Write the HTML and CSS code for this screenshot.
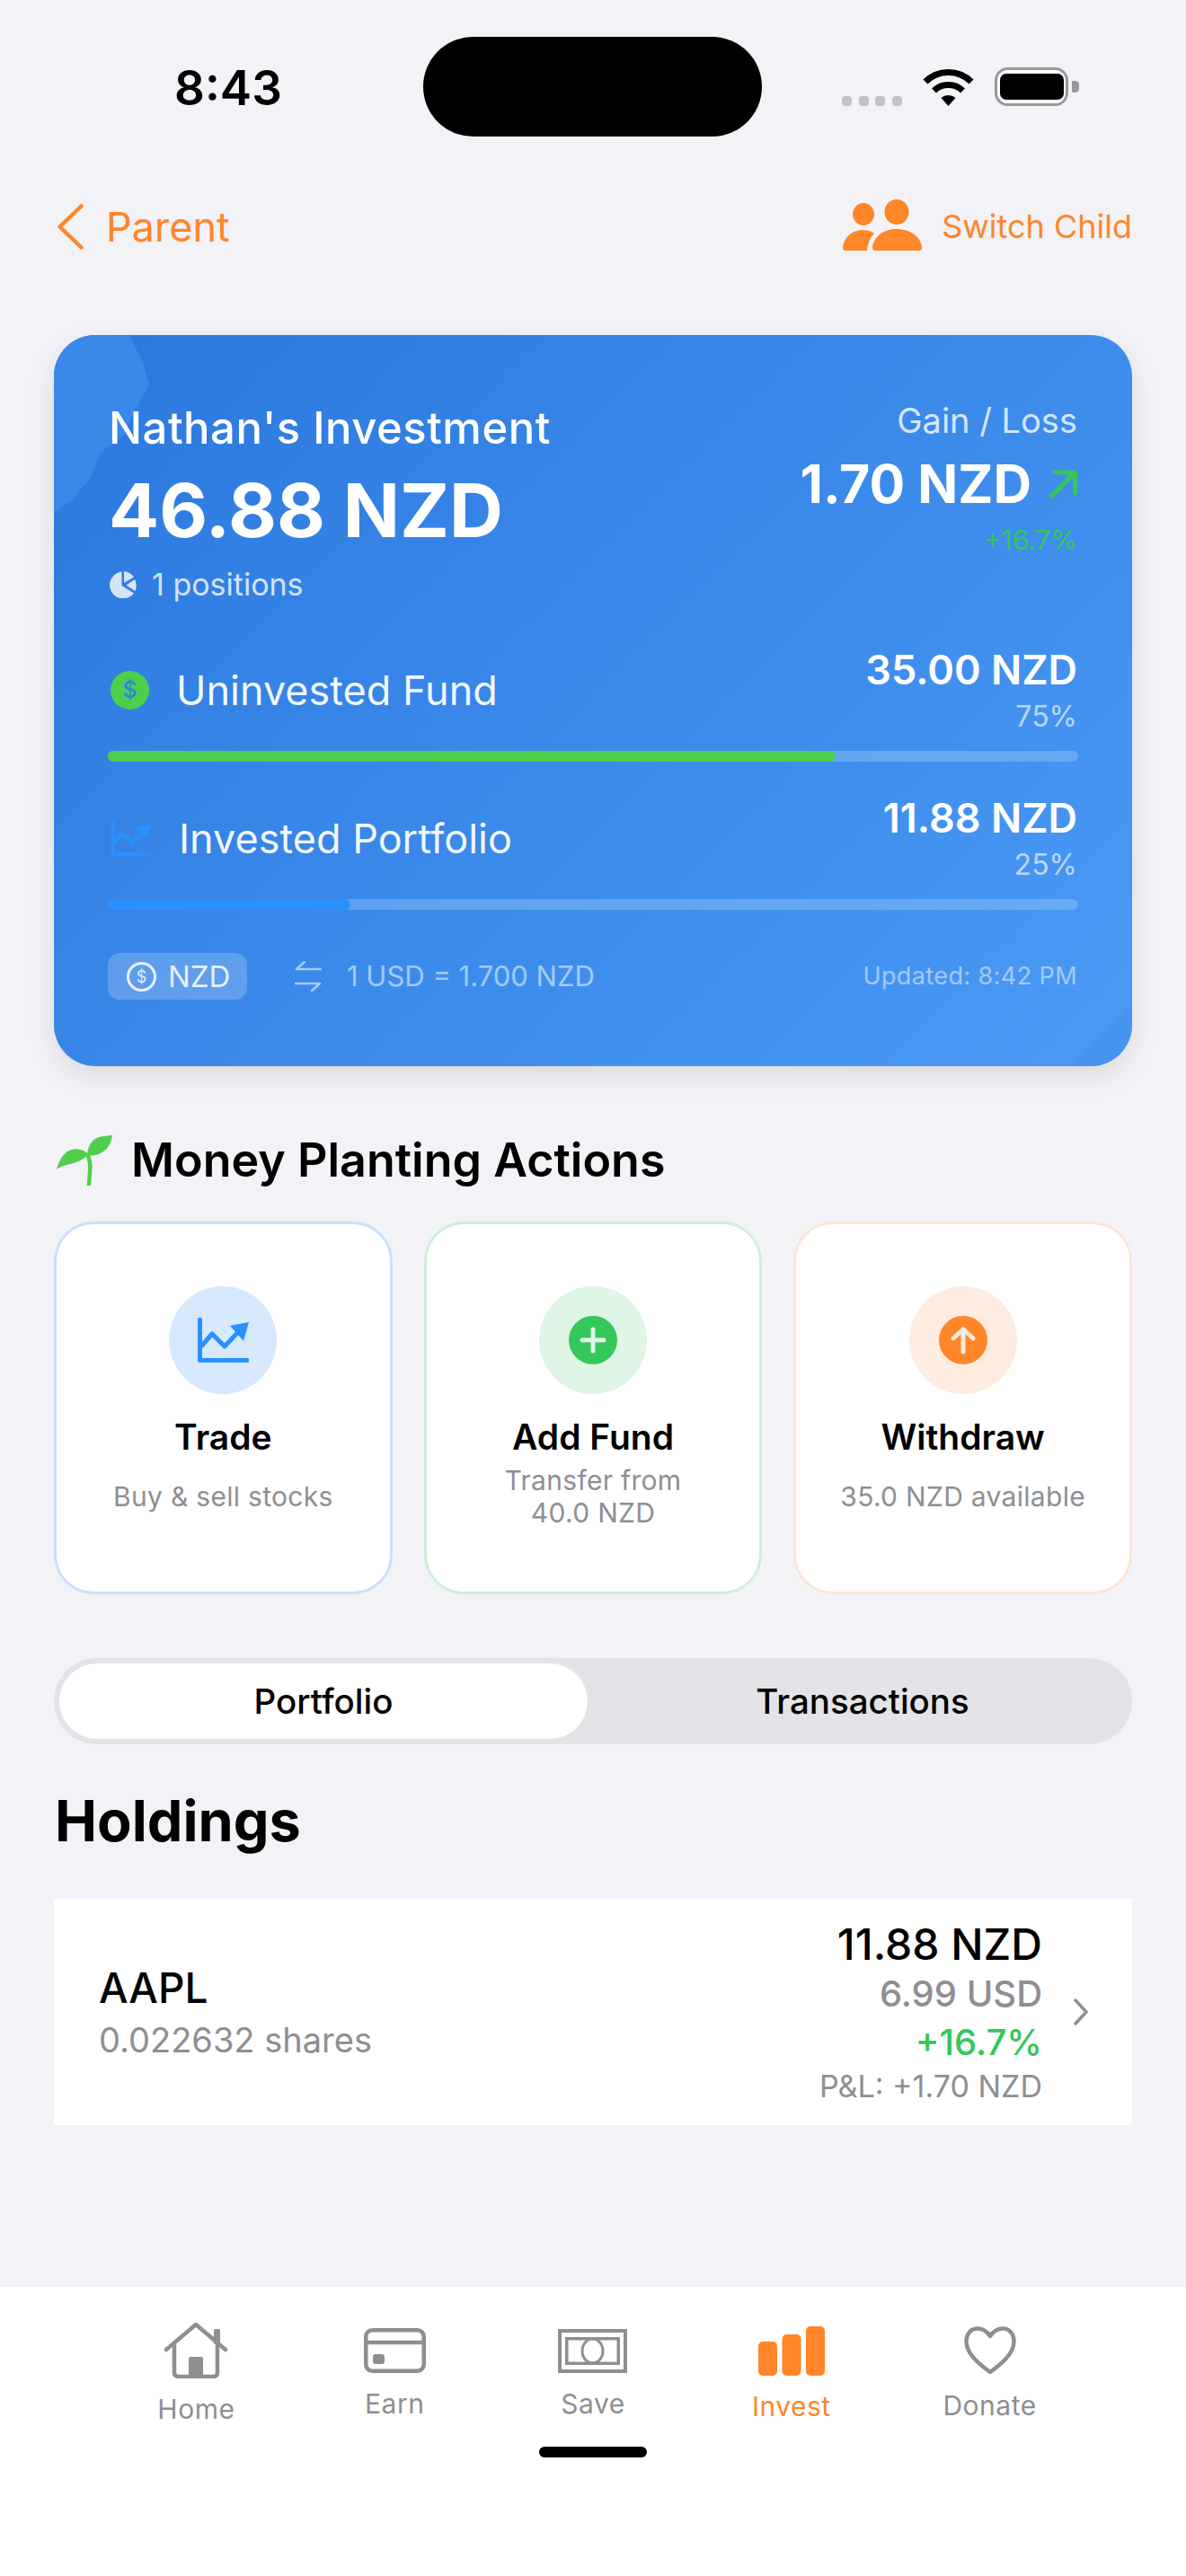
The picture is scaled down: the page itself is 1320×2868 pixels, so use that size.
FILE: index.html
```html
<!DOCTYPE html>
<html lang="en">
<head>
    <meta charset="UTF-8">
    <meta name="viewport" content="width=device-width, initial-scale=1.0">
    <title>Nathan's Investment</title>
    <link rel="stylesheet" href="styles.css">
</head>
<body>
    <svg class="defs" width="0" height="0">
        <symbol id="trend" viewBox="0 0 57 50">
            <path d="M2.5 2V47.5H55" fill="none" stroke="currentColor" stroke-width="5" stroke-linecap="round" stroke-linejoin="round"/>
            <path d="M4 32L16 18L30 32L46 15" fill="none" stroke="currentColor" stroke-width="5" stroke-linejoin="round"/>
            <path d="M36 9L57 5L51 26Z" fill="currentColor"/>
        </symbol>
    </svg>

    <!-- status bar -->
    <div class="status-bar">
        <div class="status-time">8:43</div>
        <div class="island"></div>
        <div class="status-icons">
            <div class="signal"><span></span><span></span><span></span><span></span></div>
            <svg class="wifi" width="57" height="42" viewBox="0 0 57 42">
                <path d="M3 15A36 36 0 0 1 54 15" fill="none" stroke="#000" stroke-width="7"/>
                <path d="M12.5 25A23 23 0 0 1 44.5 25" fill="none" stroke="#000" stroke-width="7"/>
                <path d="M28.5 42L20.5 33A12 12 0 0 1 36.5 33Z" fill="#000"/>
            </svg>
            <svg class="battery" width="94" height="43" viewBox="0 0 94 43">
                <rect x="1.5" y="1.5" width="79" height="40" rx="13" fill="#fff" stroke="#98989d" stroke-width="3"/>
                <rect x="6" y="7" width="71" height="29" rx="7" fill="#000"/>
                <path d="M86 15H89Q94 15 94 20V23Q94 28 89 28H86Z" fill="#98989d"/>
            </svg>
        </div>
    </div>

    <!-- top navigation -->
    <div class="top-nav">
        <div class="back-link">
            <svg width="29" height="51" viewBox="0 0 29 51">
                <path d="M26.5 2.5L2.5 25.5L26.5 48.5" fill="none" stroke="#ff8629" stroke-width="4.5" stroke-linecap="round" stroke-linejoin="round"/>
            </svg>
            <span>Parent</span>
        </div>
        <div class="switch-child">
            <svg width="88" height="57" viewBox="0 0 88 57">
                <ellipse cx="23" cy="16.5" rx="12" ry="12.5" fill="#ff8629"/>
                <ellipse cx="60" cy="14" rx="13.5" ry="14" fill="#ff8629"/>
                <path d="M33 54C34 41 46 33 60 33C74 33 87 41 88 54Q88 57 85 57H36Q33 57 33 54Z" fill="#ff8629"/>
                <path d="M0 54C1 43 10 34 22 34C27 34 31 35 35 38C31 42 28 48 27 57H3Q0 57 0 54Z" fill="#ff8629"/>
            </svg>
            <span>Switch Child</span>
        </div>
    </div>

    <!-- balance card -->
    <section class="balance-card">
        <div class="balance-top">
            <div class="balance-left">
                <div class="balance-title">Nathan's Investment</div>
                <div class="balance-amount">46.88 NZD</div>
                <div class="positions">
                    <svg width="30" height="30" viewBox="0 0 30 30">
                        <path d="M13.5 0.5A15 15 0 1 0 27 24.5L13.5 16Z" fill="currentColor"/>
                        <path d="M16 0A15 15 0 0 1 27 6.5L16 13Z" fill="currentColor"/>
                        <path d="M28 9A15 15 0 0 1 28.5 22L18.5 15.5Z" fill="currentColor"/>
                    </svg>
                    <span>1 positions</span>
                </div>
            </div>
            <div class="balance-right">
                <div class="gain-label">Gain / Loss</div>
                <div class="gain-amount">
                    <span>1.70 NZD</span>
                    <svg width="31" height="32" viewBox="0 0 31 32">
                        <path d="M2.5 29.5L28 3M6 3H28.5V26" fill="none" stroke="#34c759" stroke-width="5" stroke-linecap="round" stroke-linejoin="round"/>
                    </svg>
                </div>
                <div class="gain-percent">+16.7%</div>
            </div>
        </div>

        <div class="fund-row first">
            <div class="fund-name">
                <span class="dollar-dot">$</span>
                <span>Uninvested Fund</span>
            </div>
            <div class="fund-values">
                <div class="fund-amount">35.00 NZD</div>
                <div class="fund-percent">75%</div>
            </div>
        </div>
        <div class="bar"><div class="bar-fill green" style="width: 75%"></div></div>

        <div class="fund-row">
            <div class="fund-name">
                <svg class="trend-small" width="45" height="39"><use href="#trend"/></svg>
                <span>Invested Portfolio</span>
            </div>
            <div class="fund-values">
                <div class="fund-amount">11.88 NZD</div>
                <div class="fund-percent">25%</div>
            </div>
        </div>
        <div class="bar"><div class="bar-fill blue" style="width: 25%"></div></div>

        <div class="card-footer">
            <div class="currency-chip">
                <span class="chip-dollar">$</span>
                <span>NZD</span>
            </div>
            <svg class="swap" width="30" height="34" viewBox="0 0 30 34">
                <path d="M29 9H2L11 1M1 25H28L19 33" fill="none" stroke="currentColor" stroke-width="2.5" stroke-linecap="round" stroke-linejoin="round"/>
            </svg>
            <span class="rate">1 USD = 1.700 NZD</span>
            <span class="updated">Updated: 8:42 PM</span>
        </div>
    </section>

    <!-- actions -->
    <div class="section-title">
        <svg width="64" height="56" viewBox="0 0 64 56">
            <path d="M1 38C4 26 10 18 18 16C25 14 32 16 36 21C32 27 24 30 16 32C10 33 5 35 1 38Z" fill="#4fcf4b"/>
            <path d="M63 0C62 9 57 18 47 21C42 23 38 23 35 21C36 11 41 4 48 2C53 1 58 0 63 0Z" fill="#4fcf4b"/>
            <path d="M35 20C38 27 39 33 38 40C38 46 37 50 37 56" fill="none" stroke="#4fcf4b" stroke-width="4.5"/>
        </svg>
        <h2>Money Planting Actions</h2>
    </div>

    <div class="actions">
        <div class="action-card trade">
            <div class="action-icon">
                <svg width="57" height="50"><use href="#trend"/></svg>
            </div>
            <div class="action-title">Trade</div>
            <div class="action-sub">Buy &amp; sell stocks</div>
        </div>
        <div class="action-card fund">
            <div class="action-icon">
                <svg width="54" height="54" viewBox="0 0 54 54">
                    <circle cx="27" cy="27" r="27" fill="#34c759"/>
                    <path d="M27 15V39M15 27H39" fill="none" stroke="#dff5e6" stroke-width="5" stroke-linecap="round"/>
                </svg>
            </div>
            <div class="action-title">Add Fund</div>
            <div class="action-sub">Transfer from<br>40.0 NZD</div>
        </div>
        <div class="action-card withdraw">
            <div class="action-icon">
                <svg width="54" height="54" viewBox="0 0 54 54">
                    <circle cx="27" cy="27" r="27" fill="#ff8629"/>
                    <path d="M27 40V15M16 25L27 15L38 25" fill="none" stroke="#feece0" stroke-width="5" stroke-linecap="round" stroke-linejoin="round"/>
                </svg>
            </div>
            <div class="action-title">Withdraw</div>
            <div class="action-sub">35.0 NZD available</div>
        </div>
    </div>

    <!-- tabs -->
    <div class="segment">
        <div class="segment-item active">Portfolio</div>
        <div class="segment-item">Transactions</div>
    </div>

    <h1 class="holdings-title">Holdings</h1>

    <div class="holding">
        <div class="holding-left">
            <div class="holding-symbol">AAPL</div>
            <div class="holding-shares">0.022632 shares</div>
        </div>
        <div class="holding-right">
            <div class="holding-value">11.88 NZD</div>
            <div class="holding-usd">6.99 USD</div>
            <div class="holding-change">+16.7%</div>
            <div class="holding-pl">P&amp;L: +1.70 NZD</div>
        </div>
        <svg class="holding-arrow" width="18" height="30" viewBox="0 0 18 30">
            <path d="M3 2L15 15L3 28" fill="none" stroke="#8e8e93" stroke-width="3.5" stroke-linecap="round" stroke-linejoin="round"/>
        </svg>
    </div>

    <!-- bottom tabs -->
    <nav class="tab-bar">
        <div class="tabs">
            <div class="tab">
                <svg width="70" height="62" viewBox="0 0 70 62">
                    <path d="M2 30L35 2L68 30" fill="none" stroke="currentColor" stroke-width="4.5" stroke-linecap="round" stroke-linejoin="round"/>
                    <path d="M11 24V55Q11 60 16 60H54Q59 60 59 55V24" fill="none" stroke="currentColor" stroke-width="4.5"/>
                    <rect x="55" y="7" width="7" height="17" rx="1.5" fill="currentColor"/>
                    <rect x="27" y="38" width="16" height="24" rx="2" fill="currentColor"/>
                </svg>
                <span>Home</span>
            </div>
            <div class="tab">
                <svg width="69" height="50" viewBox="0 0 69 50">
                    <rect x="2.25" y="2.25" width="64.5" height="45.5" rx="7" fill="none" stroke="currentColor" stroke-width="4.5"/>
                    <path d="M2 16H67" stroke="currentColor" stroke-width="4.5"/>
                    <rect x="10" y="29" width="13" height="11" rx="3" fill="currentColor"/>
                </svg>
                <span>Earn</span>
            </div>
            <div class="tab">
                <svg width="77" height="49" viewBox="0 0 77 49">
                    <rect x="2" y="2" width="73" height="45" fill="none" stroke="currentColor" stroke-width="4"/>
                    <rect x="9.75" y="10.75" width="57.5" height="27.5" fill="none" stroke="currentColor" stroke-width="3.5"/>
                    <ellipse cx="38.5" cy="24.5" rx="11.5" ry="13.5" fill="none" stroke="currentColor" stroke-width="3"/>
                </svg>
                <span>Save</span>
            </div>
            <div class="tab active">
                <svg width="74" height="55" viewBox="0 0 74 55">
                    <rect x="0" y="17" width="21" height="38" rx="5" fill="currentColor"/>
                    <rect x="26.5" y="9" width="21" height="46" rx="5" fill="currentColor"/>
                    <rect x="53" y="0" width="21" height="55" rx="5" fill="currentColor"/>
                </svg>
                <span>Invest</span>
            </div>
            <div class="tab">
                <svg width="58" height="54" viewBox="0 0 58 54">
                    <path d="M29 11C25 5 20 2.5 15 2.5C7 2.5 2.5 9 2.5 17C2.5 31 18 43 29 51C40 43 55.5 31 55.5 17C55.5 9 51 2.5 43 2.5C38 2.5 33 5 29 11Z" fill="none" stroke="currentColor" stroke-width="4.5" stroke-linejoin="round"/>
                </svg>
                <span>Donate</span>
            </div>
        </div>
        <div class="home-indicator"></div>
    </nav>
</body>
</html>
```

FILE: styles.css
```css
* {
    box-sizing: border-box;
}

body {
    font-family: Inter, "Liberation Sans", sans-serif;
    margin: 0;
    padding: 0;
    width: 1320px;
    height: 2868px;
    display: flex;
    flex-direction: column;
    background-color: #f2f2f7;
    color: #000;
}

.defs {
    position: absolute;
}

/* status bar */
.status-bar {
    display: flex;
    align-items: center;
    margin-top: 41px;
    height: 111px;
}

.status-time {
    width: 471px;
    padding: 2px 0 0 194px;
    font-size: 53px;
    font-weight: 600;
    line-height: 64px;
}

.island {
    width: 377px;
    height: 111px;
    border-radius: 56px;
    background-color: #000;
}

.status-icons {
    display: flex;
    align-items: flex-end;
    margin-left: 89px;
}

.signal {
    display: flex;
    gap: 7.5px;
    margin-right: 23px;
}

.signal span {
    width: 11px;
    height: 11px;
    border-radius: 4px;
    background-color: #c2c2c4;
}

.wifi {
    margin-right: 23px;
}

/* top navigation */
.top-nav {
    display: flex;
    justify-content: space-between;
    align-items: center;
    height: 57px;
    margin-top: 70px;
    padding: 0 60px 0 64px;
    color: #ff8629;
}

.back-link {
    display: flex;
    align-items: center;
    gap: 25px;
    padding-top: 4px;
    font-size: 45px;
    line-height: 52px;
}

.switch-child {
    display: flex;
    align-items: center;
    gap: 22px;
    font-size: 36px;
    line-height: 44px;
}

.switch-child span {
    padding-top: 3px;
}

/* balance card */
.balance-card {
    position: relative;
    overflow: hidden;
    height: 814px;
    margin: 94px 60px 0;
    padding: 72px 60px 0;
    border-radius: 46px;
    background: linear-gradient(135deg, #2b78de 0%, #4a9af5 100%);
    color: #fff;
    box-shadow: 0 10px 30px rgba(0, 0, 0, 0.1);
}

.balance-card::before {
    content: "";
    position: absolute;
    left: 0;
    top: 0;
    width: 108px;
    height: 198px;
    background-color: #3a88e8;
    clip-path: polygon(0 0, 78% 0, 92% 16%, 98% 28%, 84% 42%, 72% 56%, 48% 66%, 38% 80%, 20% 92%, 0 100%);
}

.balance-card::after {
    content: "";
    position: absolute;
    right: 0;
    bottom: 0;
    width: 70px;
    height: 70px;
    background-color: #4794f1;
    clip-path: polygon(100% 0, 100% 100%, 0 100%);
}

.balance-card > * {
    position: relative;
    z-index: 1;
}

.balance-top {
    display: flex;
    justify-content: space-between;
}

.balance-left {
    padding: 3px 0 0 1px;
}

.balance-title {
    font-size: 49px;
    font-weight: 500;
    line-height: 58px;
    letter-spacing: 0.5px;
}

.balance-amount {
    margin-top: 17px;
    font-size: 83px;
    font-weight: 700;
    line-height: 90px;
}

.positions {
    display: flex;
    align-items: center;
    gap: 17px;
    margin-top: 18px;
    padding-left: 1px;
    font-size: 34px;
    line-height: 40px;
    color: rgba(255, 255, 255, 0.8);
}

.balance-right {
    text-align: right;
    padding-right: 1px;
}

.gain-label {
    font-size: 38px;
    line-height: 46px;
    color: rgba(255, 255, 255, 0.8);
}

.gain-amount {
    display: flex;
    justify-content: flex-end;
    align-items: center;
    gap: 20px;
    margin-top: 15px;
    font-size: 59px;
    font-weight: 700;
    line-height: 66px;
}

.gain-percent {
    margin-top: 11px;
    font-size: 30px;
    line-height: 36px;
    color: #34c759;
}

.fund-row {
    display: flex;
    justify-content: space-between;
    align-items: center;
    margin-top: 37px;
}

.fund-row.first {
    margin-top: 49px;
}

.fund-name {
    display: flex;
    align-items: center;
    gap: 31px;
    padding-left: 3px;
    font-size: 45px;
    line-height: 54px;
    color: rgba(255, 255, 255, 0.95);
}

.dollar-dot {
    width: 43px;
    height: 43px;
    margin-right: -1px;
    border-radius: 50%;
    background-color: #4bd04b;
    color: #2f82e8;
    font-size: 25px;
    font-weight: 500;
    line-height: 43px;
    text-align: center;
}

.trend-small {
    color: #2890ff;
}

.fund-values {
    text-align: right;
    padding-right: 1px;
}

.fund-amount {
    font-size: 45px;
    font-weight: 600;
    line-height: 52px;
}

.fund-percent {
    margin-top: 7px;
    font-size: 32px;
    line-height: 38px;
    color: rgba(255, 255, 255, 0.65);
}

.bar {
    height: 12px;
    margin-top: 19px;
    border-radius: 6px;
    background-color: rgba(255, 255, 255, 0.2);
}

.bar-fill {
    height: 12px;
    border-radius: 6px;
}

.bar-fill.green {
    background-color: #4bd04b;
}

.bar-fill.blue {
    background-color: #2890ff;
}

.card-footer {
    display: flex;
    align-items: center;
    margin-top: 48px;
}

.currency-chip {
    display: flex;
    align-items: center;
    gap: 13px;
    width: 155px;
    height: 52px;
    padding-left: 21px;
    border-radius: 13px;
    background-color: rgba(255, 255, 255, 0.2);
    font-size: 33px;
    color: rgba(255, 255, 255, 0.85);
}

.chip-dollar {
    width: 33px;
    height: 33px;
    border: 3px solid rgba(255, 255, 255, 0.85);
    border-radius: 50%;
    font-size: 18px;
    line-height: 27px;
    text-align: center;
}

.swap {
    margin: 0 28px 0 53px;
    color: rgba(255, 255, 255, 0.55);
}

.rate {
    font-size: 31px;
    line-height: 36px;
    color: rgba(255, 255, 255, 0.55);
}

.updated {
    margin-left: auto;
    padding-right: 1px;
    font-size: 27px;
    line-height: 34px;
    letter-spacing: 0.4px;
    color: rgba(255, 255, 255, 0.5);
}

/* actions */
.section-title {
    display: flex;
    align-items: center;
    gap: 20px;
    height: 60px;
    margin: 75px 60px 0 62px;
}

.section-title h2 {
    margin: 0;
    font-size: 52px;
    font-weight: 600;
    line-height: 60px;
}

.actions {
    display: flex;
    gap: 35px;
    margin: 38px 60px 0;
}

.action-card {
    flex: 1;
    height: 415px;
    padding-top: 69px;
    border: 3px solid;
    border-radius: 44px;
    background-color: #fff;
    text-align: center;
}

.action-card.trade {
    border-color: #c8e0fb;
}

.action-card.fund {
    border-color: #cfeedb;
}

.action-card.withdraw {
    border-color: #fce5d6;
}

.action-icon {
    display: flex;
    justify-content: center;
    align-items: center;
    width: 120px;
    height: 120px;
    margin: 0 auto;
    border-radius: 50%;
}

.trade .action-icon {
    background-color: #d6e9fd;
    color: #2890ff;
}

.fund .action-icon {
    background-color: #dff5e6;
}

.withdraw .action-icon {
    background-color: #feece0;
}

.action-title {
    margin-top: 24px;
    font-size: 39px;
    font-weight: 600;
    line-height: 48px;
}

.action-sub {
    display: flex;
    justify-content: center;
    align-items: center;
    height: 72px;
    margin-top: 6px;
    font-size: 30px;
    line-height: 36px;
    letter-spacing: 0.3px;
    color: #8e8e93;
}

/* tabs */
.segment {
    display: flex;
    height: 96px;
    margin: 71px 60px 0;
    padding: 6px;
    border-radius: 48px;
    background-color: #e3e3e8;
}

.segment-item {
    flex: 1;
    padding-left: 12px;
    font-size: 38.5px;
    font-weight: 500;
    line-height: 84px;
    text-align: center;
}

.segment-item.active {
    flex: none;
    width: 588px;
    padding-left: 0;
    border-radius: 42px;
    background-color: #fff;
}

.holdings-title {
    margin: 47px 60px 0 61px;
    font-size: 63px;
    font-weight: 700;
    line-height: 76px;
}

.holding {
    display: flex;
    align-items: center;
    height: 252px;
    margin: 49px 60px 0;
    padding: 0 48px 0 50px;
    background-color: #fff;
}

.holding-left {
    flex: 1;
}

.holding-symbol {
    font-size: 46px;
    font-weight: 500;
    line-height: 54px;
}

.holding-shares {
    margin-top: 8px;
    font-size: 38px;
    line-height: 46px;
    color: #8e8e93;
}

.holding-right {
    text-align: right;
}

.holding-value {
    font-size: 48px;
    font-weight: 500;
    line-height: 54px;
}

.holding-usd {
    margin-top: 6px;
    font-size: 40px;
    font-weight: 500;
    line-height: 44px;
    color: #8e8e93;
}

.holding-change {
    margin-top: 10px;
    font-size: 40px;
    font-weight: 500;
    line-height: 44px;
    color: #34c759;
}

.holding-pl {
    margin-top: 8px;
    font-size: 34px;
    line-height: 38px;
    color: #8e8e93;
}

.holding-arrow {
    margin-left: 34px;
}

/* bottom tabs */
.tab-bar {
    margin-top: auto;
    height: 322px;
    padding-top: 40px;
    background-color: #fff;
}

.tabs {
    display: flex;
    align-items: center;
    padding: 0 108px;
}

.tab {
    flex: 1;
    display: flex;
    flex-direction: column;
    align-items: center;
    gap: 16px;
    font-size: 30px;
    line-height: 36px;
    letter-spacing: 0.5px;
    color: #8e8e93;
}

.tab.active {
    color: #ff8629;
}

.home-indicator {
    width: 120px;
    height: 12px;
    margin: 24px auto 0;
    border-radius: 6px;
    background-color: #000;
}
```
